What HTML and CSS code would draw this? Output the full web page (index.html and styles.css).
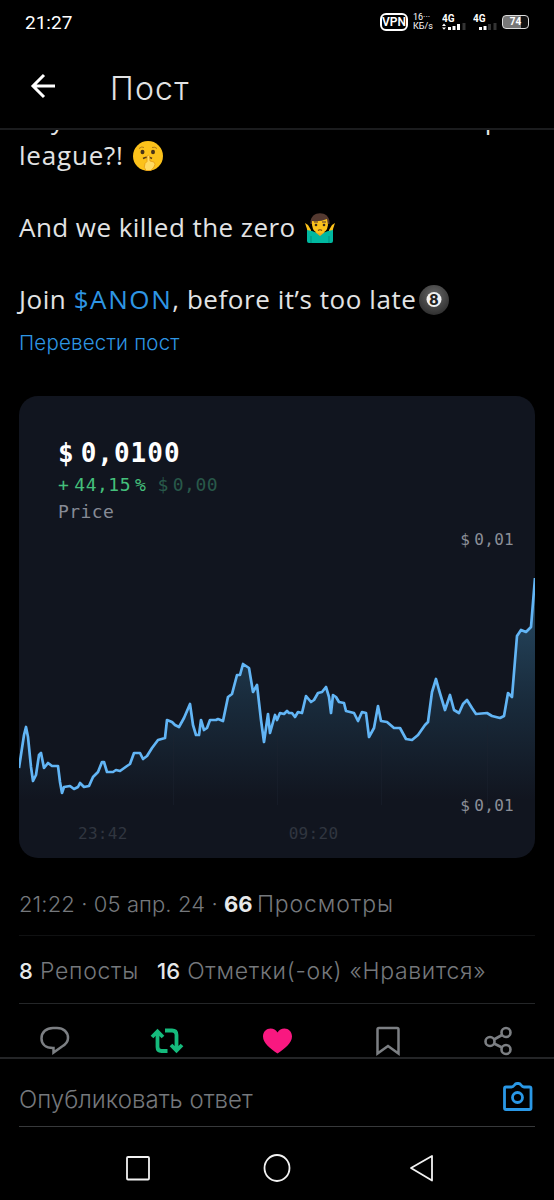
FILE: index.html
```html
<!DOCTYPE html>
<html lang="ru">
<head>
  <meta charset="UTF-8" />
  <title>Пост</title>
  <link rel="stylesheet" href="styles.css">
</head>
<body>
  <div class="phone">
    <div class="status-bar">
      <span class="clock">21:27</span>
      <div class="status-icons">
        <span class="vpn">VPN</span>
        <span class="speed"><span>16···</span><span>КБ/s</span></span>
        <svg class="signal" width="25" height="17" viewBox="0 0 25 17">
          <text x="0" y="7.5">4G</text>
          <path d="M0 12l2-2.4 2 2.4zM0 13.4h4l-2 2.4z" fill="#fff" />
          <path d="M6 13h3v3H6zM10.500 12h3v4h-3zM15 10h3v6h-3z" fill="#fff" />
          <path d="M20.500 9h3v7h-3z" fill="#333" />
        </svg>
        <svg class="signal signal-2" width="25" height="17" viewBox="0 0 25 17">
          <text x="0" y="7.500">4G</text>
          <path d="M6 13h3v3H6zM10.500 12h3v4h-3z" fill="#fff" />
          <path d="M15 10h3v6h-3zM20.500 9h3v7h-3z" fill="#333" />
        </svg>
        <span class="battery">74</span>
      </div>
    </div>

    <header class="header">
      <svg width="28" height="28" viewBox="0 0 28 28" fill="none" stroke="#fff" stroke-width="3">
        <path d="M26 14H4M15 3L4 14l11 11" />
      </svg>
      <h1>Пост</h1>
    </header>

    <main class="post">
      <div class="text">
        <p class="cut"><span>y</span><span>p</span></p>
        <p><span class="short">league?!</span>
          <svg class="emoji" width="32" height="32" viewBox="0 0 32 32">
            <circle cx="16" cy="16" r="15" fill="#fcc21b" />
            <path d="M7 8.500q3-2.500 5-1M20 7.500q3-1 5 1" fill="none" stroke="#b07a18" />
            <ellipse cx="10.500" cy="12" rx="2" ry="2.200" fill="#4a3418" />
            <ellipse cx="21" cy="12" rx="2" ry="2.200" fill="#4a3418" />
            <path d="M11 18.500q5-2.500 9 0" fill="none" stroke="#5a3b14" stroke-width="1.600" />
            <path d="M15 16q1.500-1.500 2.500 0l.5 5 4 1q2 2 0 5l-3 3.500h-5q-3-3-1-7l2-2z" fill="#ffdb62" stroke="#e59a12" stroke-width=".8" />
          </svg>
        </p>
        <p class="gap"><span>And we killed the zero</span>
          <svg class="emoji" width="32" height="32" viewBox="0 0 32 32">
            <path d="M1 11l3 2 3 5v8H4l-1-9zM31 11l-3 2-3 5v8h3l1-9z" fill="#fcc21b" />
            <path d="M3 18l5 1 5 2h6l5-2 5-1v11q0 2-2 2H5q-2 0-2-2z" fill="#00b8a0" />
            <path d="M7 24v7M25 24v7" stroke="#008f80" />
            <path d="M11 20h10l-5 4z" fill="#f2a91b" />
            <path d="M6.500 12C5-2.500 27-2.500 25.500 12z" fill="#543930" />
            <path d="M8 9q8 1 15-2l1 6q-1 8-8 8.500Q9 21 8 13z" fill="#fcc21b" />
            <path d="M10 10h4M18 10h4" stroke="#543930" stroke-width="1.200" />
            <circle cx="12" cy="13" r="1.300" fill="#3b2b20" /><circle cx="20" cy="13" r="1.300" fill="#3b2b20" />
            <path d="M14 18.500q2-1.500 4 0" fill="none" stroke="#6b3d14" stroke-width="1.200" />
          </svg>
        </p>
        <p class="gap"><span class="join">Join <a href="#">$ANON</a>, before it’s too late</span><svg class="emoji ball" width="32" height="32" viewBox="0 0 32 32">
            <defs>
              <radialGradient id="ball" cx=".5" cy=".35" r=".65">
                <stop offset="0" stop-color="#686868" />
                <stop offset="1" stop-color="#303030" />
              </radialGradient>
            </defs>
            <circle cx="16" cy="16" r="15" fill="url(#ball)" />
            <circle cx="16" cy="15.500" r="7.500" fill="#f2f2f2" />
            <text x="16" y="20.500" text-anchor="middle">8</text>
          </svg>
        </p>
      </div>
      <a class="translate" href="#">Перевести пост</a>

      <div class="card">
        <div class="quote">
          <div class="price"><i>$</i>0,0100</div>
          <div class="change"><i class="plus">+</i>44,15<i class="pct">%</i><span class="muted"><i>$</i>0,00</span></div>
          <div class="label">Price</div>
        </div>
        <div class="scale"><i>$</i>0,01</div>
        <svg class="chart" width="516" height="250" viewBox="19 570 516 250">
          <defs>
            <linearGradient id="fill" gradientUnits="userSpaceOnUse" x1="0" y1="578" x2="0" y2="800">
              <stop offset="0" stop-color="#4fa8dc" stop-opacity=".4" />
              <stop offset=".55" stop-color="#3c8ab8" stop-opacity=".19" />
              <stop offset="1" stop-color="#3c8ab8" stop-opacity="0" />
            </linearGradient>
          </defs>
          <path id="area" fill="url(#fill)" />
          <path class="grid" d="M173.500 735V805M277.500 735V805M381.500 735V805M487.500 725V805" />
          <path id="line" fill="none" stroke="#62b5f5" stroke-width="2.700" stroke-linejoin="round" />
        </svg>
        <div class="scale scale-low"><i>$</i>0,01</div>
        <div class="times"><span>23:42</span><span>09:20</span></div>
      </div>

      <div class="meta">21:22 · 05 апр. 24 · <b>66</b> <span>Просмотры</span></div>
      <div class="stats"><span><b>8</b> Репосты</span><span><b>16</b> Отметки(-ок) «Нравится»</span></div>

      <div class="actions">
        <svg width="32" height="32" viewBox="0 0 32 32" fill="none" stroke="#7c7f83" stroke-width="2.500">
          <path d="M14 24C6 24 2.500 19.500 2.500 14.500 2.500 8 7.500 4 14 4h4c6.500 0 11 4 11 10 0 4-2.500 6.500-6 8.500L14.500 28.500V24z" />
        </svg>
        <svg width="34" height="32" viewBox="0 0 34 32" fill="none" stroke="#15ba7c" stroke-width="3.800">
          <path d="M2 13l5.500-5.500L13 13M7.500 8v15q0 4 4 4h6M15 6.500h7q4.500 0 4.500 4.500v15M21 21l5.500 5.500L32 21" />
        </svg>
        <svg width="32" height="32" viewBox="0 0 32 32" fill="#f91880">
          <path d="M15.500 29.500C8.500 25 1 19 1 12.500c0-5 3.500-8 7.500-8 3 0 5.500 1.500 7 4 1.500-2.500 4-4 7-4 4 0 7.500 3 7.500 8 0 6.500-7.500 12.500-14.500 17z" />
        </svg>
        <svg width="32" height="32" viewBox="0 0 32 32" fill="none" stroke="#7c7f83" stroke-width="2.500">
          <path d="M4.500 29.500V5.500Q4.500 4 6 4h18q1.500 0 1.500 1.500v24L15 22z" />
        </svg>
        <svg width="32" height="32" viewBox="0 0 32 32" fill="none" stroke="#7c7f83" stroke-width="2.600">
          <circle cx="7" cy="17.500" r="4.500" /><circle cx="23" cy="8.500" r="4.500" /><circle cx="23" cy="25.500" r="4.500" />
          <path d="M11 15.500l8-4.500M11 19.500l8 4" />
        </svg>
      </div>
    </main>

    <footer class="reply">
      <div class="reply-box">
        <span>Опубликовать ответ</span>
        <svg width="32" height="32" viewBox="0 0 32 32" fill="none" stroke="#2a98e6" stroke-width="2.800" stroke-linejoin="round">
          <path d="M2.500 7H8q1.500 0 3-2 1-1.500 2.500-1.500h1.500q1.500 0 2.500 1.500 1.500 2 3 2h5.500q1.500 0 1.500 1.500v19.500q0 1.500-1.500 1.500H2.500Q1 29.500 1 28V8.500Q1 7 2.500 7z" transform="translate(.5 0)" />
          <circle cx="14.500" cy="17.500" r="5" />
        </svg>
      </div>
    </footer>

    <nav class="nav-bar">
      <svg width="28" height="28" viewBox="0 0 28 28"><rect x="3" y="3" width="22" height="22.500" rx="1" /></svg>
      <svg width="28" height="28" viewBox="0 0 28 28"><ellipse cx="14" cy="14" rx="12.500" ry="13" /></svg>
      <svg class="back" width="28" height="28" viewBox="0 0 28 28"><path d="M25 2v24.500L4 14z" stroke-linejoin="round" /></svg>
    </nav>
  </div>

  <script>
    const points = [
      [19,768],[24,735],[26,727],[28,737],[31,767],[33,781],[36,775],[39,755],[41,753],[44,768],
      [48,763],[52,766],[58,766],[60,782],[62,793],[64,787],[70,786],[74,789],[78,787],[80,783],
      [84,787],[89,786],[93,777],[98,772],[102,762],[104,762],[107,772],[113,772],[116,770],[120,771],
      [127,766],[130,764],[134,753],[140,753],[143,759],[147,756],[152,748],[158,740],[165,738],[167,720],
      [172,722],[175,725],[179,727],[184,718],[190,704],[193,725],[196,735],[199,735],[201,720],[204,730],
      [207,728],[210,720],[216,720],[218,719],[223,721],[228,697],[232,694],[237,675],[240,675],[243,664],
      [249,668],[253,692],[257,685],[261,720],[264,742],[268,714],[270,733],[275,715],[277,720],[280,713],
      [284,714],[287,711],[289,713],[292,713],[295,717],[298,712],[302,713],[306,696],[311,702],[314,700],
      [318,693],[322,692],[326,687],[329,697],[331,713],[333,695],[336,697],[339,702],[344,703],[346,711],
      [354,713],[358,721],[362,712],[366,713],[369,737],[374,728],[378,706],[381,721],[387,722],[394,728],
      [400,728],[406,739],[412,740],[418,735],[425,725],[428,722],[432,692],[436,679],[439,690],[445,710],
      [450,695],[454,710],[459,713],[463,704],[467,700],[472,708],[476,714],[487,713],[492,716],[500,718],
      [504,716],[508,693],[512,697],[517,636],[521,630],[526,632],[531,627],[535,578]
    ];
    const d = "M" + points.map(p => p.join(" ")).join("L");
    document.getElementById("line").setAttribute("d", d);
    document.getElementById("area").setAttribute("d", d + "V820H19Z");
  </script>
</body>
</html>
```

FILE: styles.css
```css
* {
  box-sizing: border-box;
}

body {
  margin: 0;
  background: #000;
  color: #e2e3e4;
  font-family: Inter, "Noto Sans", sans-serif;
}

.phone {
  width: 554px;
  height: 1200px;
  display: flex;
  flex-direction: column;
  overflow: hidden;
}

.phone > * {
  flex: none;
}

a {
  color: #2e96e4;
  text-decoration: none;
}

p,
h1 {
  margin: 0;
}

i {
  font-style: normal;
}

svg {
  flex: none;
}

/* status bar */
.status-bar {
  height: 44px;
  padding: 0 25px;
  display: flex;
  align-items: center;
  justify-content: space-between;
  color: #fff;
}

.clock {
  font-family: Roboto, sans-serif;
  font-size: 19px;
}

.status-icons {
  display: flex;
  align-items: center;
}

.vpn {
  width: 28px;
  height: 18px;
  border: 2px solid #fff;
  border-radius: 6px;
  font: 600 12px/14px Roboto, sans-serif;
  text-align: center;
}

.speed {
  margin: 0 10px 0 5px;
  width: 19px;
  display: flex;
  flex-direction: column;
  font: 400 9px/9px Roboto, sans-serif;
  white-space: nowrap;
}

.signal text {
  font: 700 10px Roboto, sans-serif;
  fill: #fff;
}

.signal-2 {
  margin-left: 6px;
}

.battery {
  margin-left: 4px;
  width: 27px;
  height: 14px;
  border: 1.5px solid #ddd;
  border-radius: 4px;
  background: linear-gradient(90deg, #777 72%, #111 72%);
  color: #fff;
  font: 700 10px/11px Roboto, sans-serif;
  text-align: center;
}

/* header */
.header {
  height: 86px;
  padding: 0 29px;
  display: flex;
  align-items: center;
  border-bottom: 2px solid #1b1c1e;
}

.header h1 {
  margin-left: 53px;
  padding-top: 4px;
  font-size: 32px;
  font-weight: 300;
  letter-spacing: 1.2px;
}

/* post */
.post {
  height: 927px;
  padding: 0 19px;
  overflow: hidden;
}

.text {
  margin-top: -29px;
  font-family: "Open Sans", sans-serif;
  font-size: 26px;
  line-height: 36px;
  letter-spacing: 0.45px;
  white-space: nowrap;
}

.text p {
  height: 36px;
  display: flex;
  align-items: center;
}

.text .gap {
  margin-top: 36px;
}

.text .cut {
  padding: 0 34px 0 32px;
  justify-content: space-between;
}

.short {
  letter-spacing: 0.8px;
}

.join {
  letter-spacing: 0.55px;
}

.join a {
  letter-spacing: 1.6px;
}

.emoji {
  margin: 2px 0 0 8px;
}

.ball {
  margin-left: 2px;
}

.ball text {
  font: 800 14px Inter, sans-serif;
  fill: #222;
}

.translate {
  display: block;
  height: 51px;
  font-size: 20.5px;
  line-height: 52px;
  font-weight: 300;
  letter-spacing: 0.2px;
}

.card {
  height: 462px;
  margin-top: 28px;
  border-radius: 19px;
  background: #11151f;
  overflow: hidden;
  font-family: "DejaVu Sans Mono", monospace;
}

.quote {
  padding: 40px 39px 0;
}

.price {
  height: 34px;
  color: #fff;
  font-size: 26px;
  line-height: 34px;
  font-weight: 700;
  letter-spacing: 1px;
}

.price i {
  margin-right: 6px;
}

.change {
  height: 30px;
  color: #44c07b;
  font-size: 18px;
  line-height: 30px;
  letter-spacing: 0.5px;
}

.plus {
  margin-right: 5px;
}

.pct {
  margin-left: 4px;
}

.muted {
  margin-left: 11px;
  color: #28594a;
}

.muted i,
.scale i {
  margin-right: 4px;
}

.label {
  height: 24px;
  color: #868b96;
  font-size: 18px;
  line-height: 24px;
  letter-spacing: 0.4px;
}

.scale {
  height: 30px;
  padding-right: 21px;
  color: #8b8f98;
  font-size: 16px;
  line-height: 31px;
  letter-spacing: 0.3px;
  text-align: right;
}

.chart {
  display: block;
  margin-top: 16px;
}

.grid {
  stroke: #1c2430;
  stroke-opacity: 0.45;
}

.scale-low {
  margin-top: -30px;
}

.times {
  padding-left: 59px;
  display: flex;
  gap: 161px;
  color: #30353f;
  font-size: 16px;
  line-height: 28px;
  letter-spacing: 0.3px;
}

.meta,
.stats {
  color: #75787c;
  font-size: 22px;
  font-weight: 300;
  white-space: nowrap;
}

.meta {
  height: 78px;
  padding-top: 13px;
  line-height: 66px;
  letter-spacing: 0.1px;
  border-bottom: 1px solid #101112;
}

.meta span {
  margin-left: -2px;
  font-size: 23px;
  letter-spacing: 0.9px;
}

.stats {
  height: 68px;
  display: flex;
  gap: 18px;
  font-size: 23px;
  line-height: 70px;
  letter-spacing: 0.7px;
  border-bottom: 1px solid #242628;
}

.meta b,
.stats b {
  color: #e7e9ea;
  font-size: 22px;
  font-weight: 500;
  letter-spacing: 0;
}

.meta b {
  font-weight: 700;
}

.actions {
  padding: 20px 20px 0;
  display: flex;
  justify-content: space-between;
}

/* reply */
.reply {
  height: 70px;
  padding: 0 19px;
  border-top: 2px solid #242527;
}

.reply-box {
  height: 68px;
  padding-top: 13px;
  display: flex;
  align-items: center;
  justify-content: space-between;
  border-bottom: 1px solid #37393b;
  color: #75787c;
  font-size: 24px;
  font-weight: 300;
}

.reply-box svg {
  margin: -7px 0 0;
}

.nav-bar {
  height: 73px;
  padding: 8px 119px 0 124px;
  display: flex;
  align-items: center;
  gap: 111px;
  fill: none;
  stroke: #f2f2f2;
  stroke-width: 1.8px;
}

.back {
  margin-left: 5px;
}
```
